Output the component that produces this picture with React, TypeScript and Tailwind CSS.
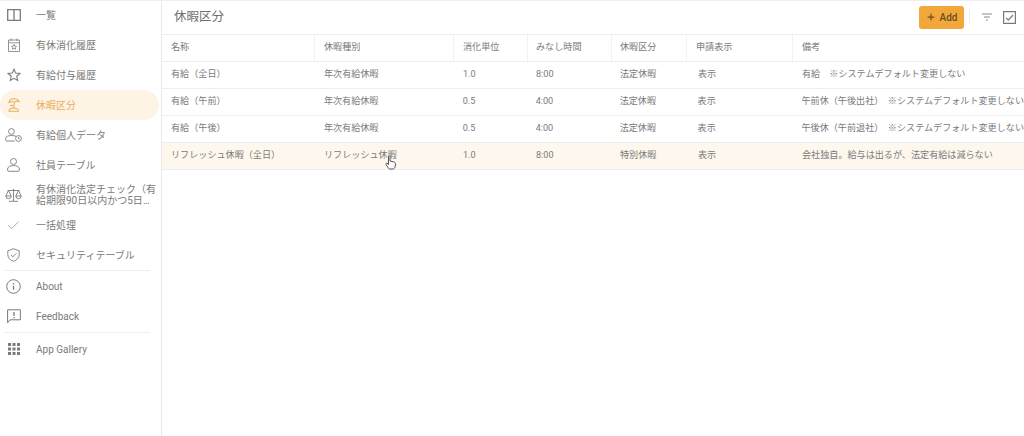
import { Check, Plus } from "lucide-react";
import type { ReactNode } from "react";

const font = { fontFamily: '"Roboto", "Noto Sans CJK JP", sans-serif' };

function Panel() {
  return (
    <svg width="14" height="12" viewBox="0 0 14 12" fill="none" stroke="currentColor" strokeWidth="1.300">
      <path d="M.7.7h12.600v10.600H.7zM7 .7v10.600" />
    </svg>
  );
}

function CalendarStar() {
  return (
    <svg width="12" height="14" viewBox="0 0 12 14" fill="none" stroke="currentColor" strokeWidth="0.800">
      <path d="M.5 2h11v11.500H.5zM.5 4.800h11M3 .5v2.500M9 .5v2.500" />
      <path d="M6 6.500l.8 1.600 1.700.2-1.200 1.200.3 1.700L6 10.400l-1.600.8.300-1.700-1.200-1.200 1.700-.2z" />
    </svg>
  );
}

function StarIcon() {
  return (
    <svg width="14" height="14" viewBox="0 0 14 14" fill="none" stroke="currentColor" strokeWidth="1.100" strokeLinejoin="miter">
      <path d="M7 1.200l1.700 3.900 4.200.4-3.200 2.800 1 4.100L7 10.300l-3.700 2.100 1-4.100L1.100 5.500l4.200-.4z" />
    </svg>
  );
}

function Beach() {
  return (
    <svg width="12" height="14" viewBox="0 0 12 14" fill="none" stroke="currentColor" strokeWidth="1.100">
      <path d="M1 4.500C1.500 2 3.500.8 6 .8c2.200 0 4 1 5 2.700-1.600-.5-2.800-.3-4 .6-1.800-.6-4-.4-6 .4z" />
      <path d="M6.500 4.500L5.500 10" />
      <path d="M2 7.500h3" />
      <path d="M1 13.300c0-2 1.800-3.300 4.500-3.300s5 1.300 5 3.300z" />
    </svg>
  );
}

function UserClock() {
  return (
    <svg width="17" height="14" viewBox="0 0 17 14" fill="none" stroke="currentColor" strokeWidth="0.900">
      <circle cx="6.500" cy="3.500" r="2.900" />
      <path d="M11 8.300c-1.200-.5-2.700-.8-4.500-.8C3 7.500.6 8.700.6 10.800v1c0 .7.500 1.200 1.200 1.200h8" />
      <circle cx="13.500" cy="10.500" r="2.900" />
      <path d="M13.500 9v1.700h1.200" />
    </svg>
  );
}

function Person() {
  return (
    <svg width="13" height="14" viewBox="0 0 13 14" fill="none" stroke="currentColor" strokeWidth="0.900">
      <circle cx="6.500" cy="3.500" r="3" />
      <path d="M.6 11c0-2.200 2.600-3.400 5.900-3.400s5.900 1.200 5.900 3.400v1c0 .8-.5 1.300-1.300 1.300H1.900C1.100 13.300.6 12.800.6 12z" />
    </svg>
  );
}

function Balance() {
  return (
    <svg width="17" height="14" viewBox="0 0 17 14" fill="none" stroke="currentColor" strokeWidth="0.900">
      <path d="M8.500 1v12M4 13.300h9M2.500 2.500h12" />
      <path d="M3.500 2.500L.8 8h5.400zM13.500 2.500L10.800 8h5.400z" />
      <path d="M.8 8a2.700 2.700 0 0 0 5.400 0M10.800 8a2.700 2.700 0 0 0 5.400 0" />
    </svg>
  );
}

function Shield() {
  return (
    <svg width="13" height="14" viewBox="0 0 13 14" fill="none" stroke="currentColor" strokeWidth="0.900">
      <path d="M6.500.7l5.700 2.100v3.700c0 3.200-2.300 5.800-5.700 6.800C3.100 12.300.8 9.700.8 6.500V2.800z" />
      <path d="M3.800 6.800l2 2 3.500-3.500" />
    </svg>
  );
}

function InfoRing() {
  return (
    <svg width="15" height="15" viewBox="0 0 15 15" fill="none" stroke="currentColor" strokeWidth="1">
      <circle cx="7.500" cy="7.500" r="6.800" />
      <path d="M7.500 6.800v4" strokeWidth="1.300" />
      <path d="M7.500 4v1.400" strokeWidth="1.300" />
    </svg>
  );
}

function FeedbackBox() {
  return (
    <svg width="14" height="15" viewBox="0 0 14 15" fill="none" stroke="currentColor" strokeWidth="1">
      <path d="M.6.8h12.800v10H3L.6 13.700z" />
      <path d="M7 3v4M7 8v1.300" strokeWidth="1.300" />
    </svg>
  );
}

function Dots() {
  return (
    <svg width="12" height="12" viewBox="0 0 12 12" fill="currentColor">
      <path d="M0 0h3v3H0zM4.500 0h3v3h-3zM9 0h3v3H9zM0 4.500h3v3H0zM4.500 4.500h3v3h-3zM9 4.500h3v3H9zM0 9h3v3H0zM4.500 9h3v3h-3zM9 9h3v3H9z" />
    </svg>
  );
}

type NavItem = { label: string; icon: ReactNode; active?: boolean; two?: boolean };

const topItems: NavItem[] = [
  { label: "一覧", icon: <Panel /> },
  { label: "有休消化履歴", icon: <CalendarStar /> },
  { label: "有給付与履歴", icon: <StarIcon /> },
  { label: "休暇区分", icon: <Beach />, active: true },
  { label: "有給個人データ", icon: <UserClock /> },
  { label: "社員テーブル", icon: <Person /> },
  { label: "有休消化法定チェック（有給期限90日以内かつ5日未満）", icon: <Balance />, two: true },
  { label: "一括処理", icon: <Check size={15} strokeWidth={1} /> },
  { label: "セキュリティテーブル", icon: <Shield /> },
];

const headers = ["名称", "休暇種別", "消化単位", "みなし時間", "休暇区分", "申請表示", "備考"];
const widths = ["w-[153px]", "w-[139px]", "w-[74px]", "w-[84px]", "w-[75px]", "w-[106px]", "flex-1"];
const headPad = ["pl-[9px]", "pl-[9px]", "pl-[9px]", "pl-[8px]", "pl-[8px]", "pl-[9px]", "pl-[9px]"];
const cellPad = ["pl-[9px]", "pl-[9px]", "pl-[9px]", "pl-[8px]", "pl-[8px]", "pl-[11px]", "pl-[9px]"];

const rows = [
  ["有給（全日）", "年次有給休暇", "1.0", "8:00", "法定休暇", "表示", "有給　※システムデフォルト変更しない"],
  ["有給（午前）", "年次有給休暇", "0.5", "4:00", "法定休暇", "表示", "午前休（午後出社）　※システムデフォルト変更しない"],
  ["有給（午後）", "年次有給休暇", "0.5", "4:00", "法定休暇", "表示", "午後休（午前退社）　※システムデフォルト変更しない"],
  ["リフレッシュ休暇（全日）", "リフレッシュ休暇", "1.0", "8:00", "特別休暇", "表示", "会社独自。給与は出るが、法定有給は減らない"],
];

function NavRow({ item }: { item: NavItem }) {
  return (
    <div
      className={`flex h-[30px] items-center ${item.active ? "rounded-full bg-[#fdf4e5] text-[#e9ae5c]" : "text-[#7a7a7a]"}`}
    >
      <span className="flex w-[27px] flex-none items-center justify-center">{item.icon}</span>
      {item.two ? (
        <span className="ml-[9px] line-clamp-2 w-[122px] text-[10px] leading-[11px] text-[#7a7a7a]">{item.label}</span>
      ) : (
        <span className="ml-[9px] text-[10px]">{item.label}</span>
      )}
    </div>
  );
}

export default function App() {
  return (
    <div className="relative flex h-[436px] w-[1024px] overflow-hidden bg-white" style={font}>
      <div className="absolute inset-x-0 top-0 h-px bg-[#eeeeee]" />
      <aside className="w-[162px] flex-none border-r border-[#e8e8e8] pr-[2px]">
        {topItems.map((item) => (
          <NavRow key={item.label} item={item} />
        ))}
        <div className="mx-1 h-px w-[146px] bg-[#eeeeee]" />
        <NavRow item={{ label: "About", icon: <InfoRing /> }} />
        <NavRow item={{ label: "Feedback", icon: <FeedbackBox /> }} />
        <div className="mx-1 my-px h-px w-[146px] bg-[#eeeeee]" />
        <NavRow item={{ label: "App Gallery", icon: <Dots /> }} />
      </aside>

      <main className="min-w-0 flex-1">
        <header className="flex h-[35px] items-center border-b border-[#eeeeee] pl-[12px] pr-[8px]">
          <h1 className="pt-px text-[12.500px] text-[#6e6e6e]">休暇区分</h1>
          <div className="ml-auto flex items-center">
            <button className="flex h-[23px] w-[45px] items-center justify-center gap-[4px] rounded-[3px] bg-[#f2a73b] text-[10px] font-medium text-[#6b4f22]">
              <Plus size={10} strokeWidth={3} />
              Add
            </button>
            <span className="ml-[5px] h-[16px] w-px bg-[#eeeeee]" />
            <svg className="ml-[12px] text-[#8a8a8a]" width="10" height="8" viewBox="0 0 10 8" fill="none" stroke="currentColor" strokeWidth="1">
              <path d="M0 1h10M2 4h6M4 7h2" />
            </svg>
            <svg className="ml-[11px] text-[#7a7a7a]" width="13" height="13" viewBox="0 0 13 13" fill="none" stroke="currentColor" strokeWidth="1.200">
              <path d="M.6.6h11.800v11.800H.6z" />
              <path d="M3 6.800l2.300 2.300L10 4" />
            </svg>
          </div>
        </header>

        <div className="relative overflow-hidden">
          <div className="flex h-[27px] items-center border-b border-[#eeeeee] text-[9.100px] text-[#7a7a7a]">
            {headers.map((h, i) => (
              <div
                key={h}
                className={`flex h-full items-center ${widths[i]} ${i < 6 ? "border-r border-[#f2f2f2]" : ""} ${headPad[i]}`}
              >
                {h}
              </div>
            ))}
          </div>
          {rows.map((row, r) => (
            <div
              key={r}
              className={`flex h-[27px] items-center whitespace-nowrap border-b border-[#eeeeee] text-[9.100px] text-[#7a7a7a] ${r === 3 ? "bg-[#fdf7ee]" : ""}`}
            >
              {row.map((cell, i) => (
                <div key={i} className={`${widths[i]} ${cellPad[i]}`}>
                  {cell}
                </div>
              ))}
            </div>
          ))}
          {/* mouse pointer from the video capture */}
          <svg
            className="absolute left-[223px] top-[120px]"
            width="12"
            height="15"
            viewBox="0 0 12 15"
            fill="#fff"
            stroke="#555"
            strokeWidth="1"
          >
            <path d="M3.500 1.500c0-1 1.500-1 1.500 0V6l4 1c1 .3 1.500 1 1.500 2l-.5 3c-.2 1-1 2-2 2H5c-1 0-1.500-.5-2-1.500L1 9.500c-.5-1 .8-1.800 1.500-1l1 1.200z" />
          </svg>
        </div>
      </main>
    </div>
  );
}
